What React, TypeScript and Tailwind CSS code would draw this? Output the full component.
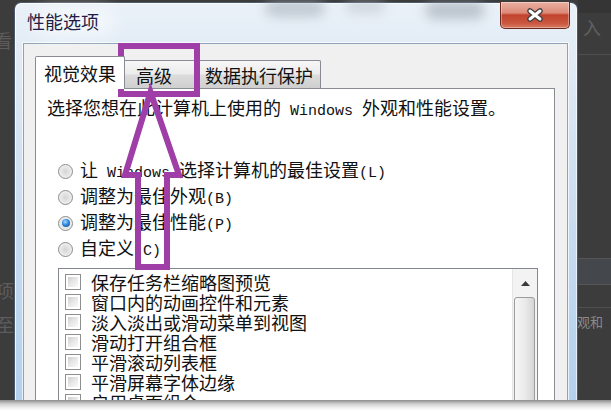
import type { ReactNode } from 'react';

// Latin runs use half-width mono, like SimSun's Latin glyphs
const L = ({ children }: { children: ReactNode }) => (
    <span className="font-['Liberation_Mono',monospace] text-[15px]">{children}</span>
);

const radios: { label: ReactNode; checked?: boolean }[] = [
    { label: <>让<L>&nbsp;Windows&nbsp;</L>选择计算机的最佳设置<L>(L)</L></> },
    { label: <>调整为最佳外观<L>(B)</L></> },
    { label: <>调整为最佳性能<L>(P)</L></>, checked: true },
    { label: <>自定义<L>(C)</L></> },
];

const effects = [
    '保存任务栏缩略图预览',
    '窗口内的动画控件和元素',
    '淡入淡出或滑动菜单到视图',
    '滑动打开组合框',
    '平滑滚动列表框',
    '平滑屏幕字体边缘',
    '启用桌面组合',
];

function Radio({ checked }: { checked?: boolean }) {
    return (
        <span className="w-[15px] h-[15px] shrink-0 rounded-full border border-[#8a8b8c] bg-[radial-gradient(circle_at_50%_50%,#d4d4d4_0%,#e9e9e9_55%,#fbfbfb_100%)] flex items-center justify-center">
            {checked && (
                <span className="w-[8px] h-[8px] rounded-full bg-[radial-gradient(circle_at_40%_35%,#a9dcff_0%,#2f8ae0_45%,#0b3f86_100%)]" />
            )}
        </span>
    );
}

function Checkbox() {
    return (
        <span className="w-[16px] h-[16px] shrink-0 border border-[#8e8f8f] bg-white p-[2px]">
            <span className="block w-full h-full bg-[linear-gradient(135deg,#cfcfcf_0%,#e8e8e8_50%,#f9f9f9_100%)]" />
        </span>
    );
}

function CloseButton() {
    return (
        <div className="w-[70px] h-[27px] -mt-[1px] rounded-b-[5px] border border-t-0 border-[#6b2a1f] bg-[linear-gradient(180deg,#eab0a2_0%,#dc8a78_42%,#c2432d_50%,#c9553e_80%,#d87a5f_100%)] shadow-[inset_0_0_0_1px_rgba(255,255,255,0.35)] flex items-center justify-center">
            <svg width="18" height="14" viewBox="0 0 18 14">
                <path d="M4 3 L14 11 M14 3 L4 11" stroke="#3e3e3e" strokeWidth="5.5" strokeLinecap="round" />
                <path d="M4 3 L14 11 M14 3 L4 11" stroke="#ffffff" strokeWidth="3" strokeLinecap="round" />
            </svg>
        </div>
    );
}

export default function App() {
    return (
        <div className="relative w-[611px] h-[411px] overflow-hidden bg-white font-['Noto_Sans_CJK_SC',sans-serif] text-[#111]">
            <div className="relative h-[400px] flex bg-[#3c3c3c] overflow-hidden">
                {/* page behind, left edge */}
                <div className="w-[14px] shrink-0 relative overflow-hidden text-[18px] leading-none text-[#5d5d5d]">
                    <div className="mt-[31px] -ml-[6px]">看</div>
                    <div className="mt-[232px] -ml-[4px]">项</div>
                    <div className="mt-[16px] -ml-[4px]">至</div>
                </div>

                {/* window */}
                <div className="relative w-[564px] shrink-0 mt-[2px] flex flex-col rounded-t-[7px] border border-b-0 border-[#4b5a6b] bg-[linear-gradient(180deg,#eaf1f8_0%,#d9e6f4_25%,#c6dbf0_60%,#b3d0ee_100%)] shadow-[inset_1px_1px_0_rgba(255,255,255,0.8),inset_-1px_0_0_rgba(255,255,255,0.6)]">
                    {/* blurred glass */}
                    <div className="absolute left-[250px] top-[-4px] w-[60px] h-[18px] rounded-full bg-[#9aa4ae] opacity-50 blur-[6px]" />
                    <div className="absolute left-[330px] top-[-4px] w-[40px] h-[14px] rounded-full bg-[#a8b0b8] opacity-40 blur-[6px]" />
                    <div className="absolute left-[410px] top-[-2px] w-[60px] h-[18px] rounded-full bg-[#8d97a2] opacity-50 blur-[6px]" />
                    <div className="absolute left-[20px] top-[4px] w-[80px] h-[30px] rounded-full bg-white opacity-50 blur-[8px]" />

                    {/* title bar */}
                    <div className="relative h-[40px] shrink-0 flex items-start justify-between pl-[12px] pr-[7px]">
                        <span className="mt-[8px] text-[18px] leading-[20px] text-[#231c46]">性能选项</span>
                        <CloseButton />
                    </div>

                    {/* client area */}
                    <div className="flex-1 ml-[8px] mr-[9px] flex flex-col bg-[#f0f0f0] border border-b-0 border-[#8fa2b7] shadow-[0_0_0_1px_rgba(255,255,255,0.7)] pt-[11px] pl-[11px] pr-[12px]">
                        {/* tabs */}
                        <div className="flex items-end h-[33px] text-[18px] leading-[20px]">
                            <div className="relative z-10 h-[33px] -mb-px w-[90px] bg-white border border-b-0 border-[#898c95] rounded-t-[2px] flex items-center pl-[8px]">
                                视觉效果
                            </div>
                            <div className="h-[28px] w-[72px] -ml-px bg-[linear-gradient(180deg,#f7f7f7_0%,#ececec_48%,#dcdcdc_52%,#cfcfcf_100%)] border border-b-0 border-[#898c95] rounded-t-[2px] flex items-center pl-[11px]">
                                高级
                            </div>
                            <div className="h-[28px] w-[126px] -ml-px bg-[linear-gradient(180deg,#f7f7f7_0%,#ececec_48%,#dcdcdc_52%,#cfcfcf_100%)] border border-b-0 border-[#898c95] rounded-t-[2px] flex items-center pl-[9px]">
                                数据执行保护
                            </div>
                        </div>

                        {/* panel */}
                        <div className="flex-1 bg-white border border-b-0 border-[#898c95] flex flex-col pt-[8px] text-[18px] leading-[20px]">
                            <p className="pl-[11px] whitespace-nowrap">
                                选择您想在此计算机上使用的<L>&nbsp;Windows&nbsp;</L>外观和性能设置。
                            </p>

                            <div className="mt-[36px] pl-[22px] flex flex-col">
                                {radios.map((r, i) => (
                                    <div key={i} className="h-[26px] flex items-center gap-[7px] whitespace-nowrap">
                                        <Radio checked={r.checked} />
                                        <span>{r.label}</span>
                                    </div>
                                ))}
                            </div>

                            {/* effects list */}
                            <div className="flex-1 mt-[6px] ml-[22px] mr-[16px] border border-b-0 border-[#828790] bg-white flex overflow-hidden">
                                <div className="flex-1 pt-[3px] pl-[6px] flex flex-col">
                                    {effects.map((e) => (
                                        <div key={e} className="h-[20px] shrink-0 flex items-center gap-[10px] whitespace-nowrap">
                                            <Checkbox />
                                            <span>{e}</span>
                                        </div>
                                    ))}
                                </div>
                                <div className="w-[25px] shrink-0 bg-[#f3f3f3] border-l border-[#e6e6e6] flex flex-col items-center">
                                    <div className="h-[28px] w-full flex items-center justify-center">
                                        <svg width="9" height="5" viewBox="0 0 9 5">
                                            <path d="M0 5 L4.5 0 L9 5 Z" fill="#3a3a3a" />
                                        </svg>
                                    </div>
                                    <div className="flex-1 w-[21px] -ml-[2px] rounded-[3px] border border-[#9c9c9c] bg-[linear-gradient(90deg,#f6f6f6_0%,#ebebeb_50%,#d6d6d6_100%)]" />
                                </div>
                            </div>
                        </div>
                    </div>
                </div>

                {/* page behind, right edge */}
                <div className="flex-1 flex flex-col relative overflow-hidden text-[#606060]">
                    <div className="h-[13px] bg-[#353535]" />
                    <div className="h-[42px] border-b border-[#4f4f4f] text-[18px] leading-[28px] pl-[5px]">入</div>
                    <div className="h-[203px]" />
                    <div className="h-[27px] border-y border-[#555] bg-[#44484d]" />
                    <div className="h-[23px] border-b border-[#505050]" />
                    <div className="text-[13px] leading-[28px] text-[#8a8a8a] -ml-[1px]">观和</div>
                </div>
            </div>

            {/* drop shadow below */}
            <div className="h-[11px] bg-[linear-gradient(180deg,#8c8c8c_0%,#cfcfcf_35%,#f4f4f4_75%,#ffffff_100%)]" />

            {/* annotation */}
            <svg className="absolute inset-0 pointer-events-none" width="611" height="411" viewBox="0 0 611 411">
                <rect x="121" y="46" width="76" height="48" fill="none" stroke="#9e3ea6" strokeWidth="6" />
                <path
                    d="M150.5 92 L125 175 L138 175 L138 267 L167 267 L167 175 L179 175 Z"
                    fill="none"
                    stroke="#9e3ea6"
                    strokeWidth="6"
                    strokeLinejoin="miter"
                />
            </svg>
        </div>
    );
}
